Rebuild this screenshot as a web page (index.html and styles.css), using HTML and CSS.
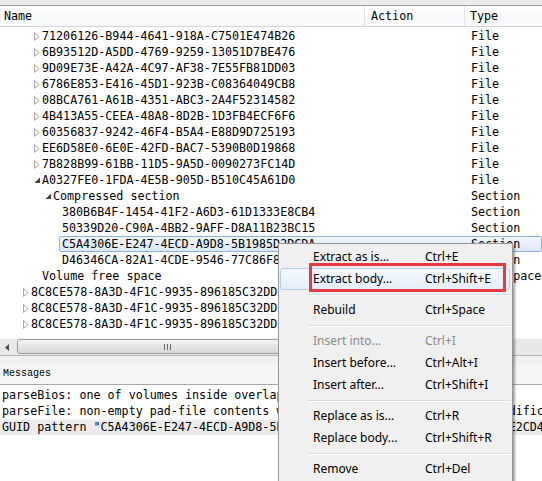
FILE: index.html
```html
<!DOCTYPE html>
<html>
<head>
<meta charset="utf-8">
<link rel="stylesheet" href="styles.css">
</head>
<body>
<div class="app">
  <div class="topstrip"></div>
  <div class="tree">
    <div class="thead">
      <div class="h-name">Name</div>
      <div class="h-action">Action</div>
      <div class="h-type">Type</div>
    </div>
    <div class="rows">
      <div class="row"><div class="name l2"><span class="arw"><svg width="6" height="9" viewBox="0 0 6 9"><path d="M0.5 0.5 L5 4.5 L0.5 8.5 Z" fill="#fff" stroke="#a6a6a6"/></svg></span>71206126-B944-4641-918A-C7501E474B26</div><div class="action"></div><div class="type">File</div></div>
      <div class="row"><div class="name l2"><span class="arw"><svg width="6" height="9" viewBox="0 0 6 9"><path d="M0.5 0.5 L5 4.5 L0.5 8.5 Z" fill="#fff" stroke="#a6a6a6"/></svg></span>6B93512D-A5DD-4769-9259-13051D7BE476</div><div class="action"></div><div class="type">File</div></div>
      <div class="row"><div class="name l2"><span class="arw"><svg width="6" height="9" viewBox="0 0 6 9"><path d="M0.5 0.5 L5 4.5 L0.5 8.5 Z" fill="#fff" stroke="#a6a6a6"/></svg></span>9D09E73E-A42A-4C97-AF38-7E55FB81DD03</div><div class="action"></div><div class="type">File</div></div>
      <div class="row"><div class="name l2"><span class="arw"><svg width="6" height="9" viewBox="0 0 6 9"><path d="M0.5 0.5 L5 4.5 L0.5 8.5 Z" fill="#fff" stroke="#a6a6a6"/></svg></span>6786E853-E416-45D1-923B-C08364049CB8</div><div class="action"></div><div class="type">File</div></div>
      <div class="row"><div class="name l2"><span class="arw"><svg width="6" height="9" viewBox="0 0 6 9"><path d="M0.5 0.5 L5 4.5 L0.5 8.5 Z" fill="#fff" stroke="#a6a6a6"/></svg></span>08BCA761-A61B-4351-ABC3-2A4F52314582</div><div class="action"></div><div class="type">File</div></div>
      <div class="row"><div class="name l2"><span class="arw"><svg width="6" height="9" viewBox="0 0 6 9"><path d="M0.5 0.5 L5 4.5 L0.5 8.5 Z" fill="#fff" stroke="#a6a6a6"/></svg></span>4B413A55-CEEA-48A8-8D2B-1D3FB4ECF6F6</div><div class="action"></div><div class="type">File</div></div>
      <div class="row"><div class="name l2"><span class="arw"><svg width="6" height="9" viewBox="0 0 6 9"><path d="M0.5 0.5 L5 4.5 L0.5 8.5 Z" fill="#fff" stroke="#a6a6a6"/></svg></span>60356837-9242-46F4-B5A4-E88D9D725193</div><div class="action"></div><div class="type">File</div></div>
      <div class="row"><div class="name l2"><span class="arw"><svg width="6" height="9" viewBox="0 0 6 9"><path d="M0.5 0.5 L5 4.5 L0.5 8.5 Z" fill="#fff" stroke="#a6a6a6"/></svg></span>EE6D58E0-6E0E-42FD-BAC7-5390B0D19868</div><div class="action"></div><div class="type">File</div></div>
      <div class="row"><div class="name l2"><span class="arw"><svg width="6" height="9" viewBox="0 0 6 9"><path d="M0.5 0.5 L5 4.5 L0.5 8.5 Z" fill="#fff" stroke="#a6a6a6"/></svg></span>7B828B99-61BB-11D5-9A5D-0090273FC14D</div><div class="action"></div><div class="type">File</div></div>
      <div class="row"><div class="name l2"><span class="arw"><svg width="7" height="7" viewBox="0 0 7 7"><path d="M6 0.5 L6 6 L0.5 6 Z" fill="#3f3f3f"/></svg></span>A0327FE0-1FDA-4E5B-905D-B510C45A61D0</div><div class="action"></div><div class="type">File</div></div>
      <div class="row"><div class="name l3"><span class="arw"><svg width="7" height="7" viewBox="0 0 7 7"><path d="M6 0.5 L6 6 L0.5 6 Z" fill="#3f3f3f"/></svg></span>Compressed section</div><div class="action"></div><div class="type">Section</div></div>
      <div class="row"><div class="name l4">380B6B4F-1454-41F2-A6D3-61D1333E8CB4</div><div class="action"></div><div class="type">Section</div></div>
      <div class="row"><div class="name l4">50339D20-C90A-4BB2-9AFF-D8A11B23BC15</div><div class="action"></div><div class="type">Section</div></div>
      <div class="row sel"><div class="name">C5A4306E-E247-4ECD-A9D8-5B1985D2DCDA</div><div class="action"></div><div class="type">Section</div></div>
      <div class="row"><div class="name l4">D46346CA-82A1-4CDE-9546-77C86F893509</div><div class="action"></div><div class="type">Section</div></div>
      <div class="row"><div class="name l2"><span class="arw"></span>Volume free space</div><div class="action"></div><div class="type">Free space</div></div>
      <div class="row"><div class="name l1"><span class="arw"><svg width="6" height="9" viewBox="0 0 6 9"><path d="M0.5 0.5 L5 4.5 L0.5 8.5 Z" fill="#fff" stroke="#a6a6a6"/></svg></span>8C8CE578-8A3D-4F1C-9935-896185C32DD3</div><div class="action"></div><div class="type">Volume</div></div>
      <div class="row"><div class="name l1"><span class="arw"><svg width="6" height="9" viewBox="0 0 6 9"><path d="M0.5 0.5 L5 4.5 L0.5 8.5 Z" fill="#fff" stroke="#a6a6a6"/></svg></span>8C8CE578-8A3D-4F1C-9935-896185C32DD3</div><div class="action"></div><div class="type">Volume</div></div>
      <div class="row"><div class="name l1"><span class="arw"><svg width="6" height="9" viewBox="0 0 6 9"><path d="M0.5 0.5 L5 4.5 L0.5 8.5 Z" fill="#fff" stroke="#a6a6a6"/></svg></span>8C8CE578-8A3D-4F1C-9935-896185C32DD3</div><div class="action"></div><div class="type">Volume</div></div>
    </div>
    <div class="hscroll">
      <div class="sb-btn"><svg width="4" height="7" viewBox="0 0 4 7"><path d="M4 0 L0 3.5 L4 7 Z" fill="#4d4d4d"/></svg></div>
      <div class="sb-thumb"><span class="grip"></span><span class="grip"></span><span class="grip"></span></div>
    </div>
  </div>
  <div class="splitter"></div>
  <div class="dock">
    <div class="dock-title">Messages</div>
    <div class="msgs">
      <div class="msg">parseBios: one of volumes inside overlaps the end of data</div>
      <div class="msg">parseFile: non-empty pad-file contents will be destroyed after volume modifications</div>
      <div class="msg cur">GUID pattern "C5A4306E-E247-4ECD-A9D8-5B1985D2DCDA" found as "6E30A4C547E2CD4EA9D85B1985D2DCDA" in C5A4306E-E247-4ECD-A9D8-5B1985D2DCDA</div>
    </div>
  </div>
</div>

<div class="menu">
  <div class="mi"><span>Extract as is...</span><span>Ctrl+E</span></div>
  <div class="mi hover"><span>Extract body...</span><span>Ctrl+Shift+E</span></div>
  <div class="sep"></div>
  <div class="mi"><span>Rebuild</span><span>Ctrl+Space</span></div>
  <div class="sep"></div>
  <div class="mi dis"><span>Insert into...</span><span>Ctrl+I</span></div>
  <div class="mi"><span>Insert before...</span><span>Ctrl+Alt+I</span></div>
  <div class="mi"><span>Insert after...</span><span>Ctrl+Shift+I</span></div>
  <div class="sep"></div>
  <div class="mi"><span>Replace as is...</span><span>Ctrl+R</span></div>
  <div class="mi"><span>Replace body...</span><span>Ctrl+Shift+R</span></div>
  <div class="sep"></div>
  <div class="mi"><span>Remove</span><span>Ctrl+Del</span></div>
</div>
<div class="redbox"></div>
</body>
</html>
```

FILE: styles.css
```css
html, body {
  margin: 0;
  padding: 0;
}
body {
  width: 542px;
  height: 481px;
  overflow: hidden;
  position: relative;
  background: #fff;
  font-family: "DejaVu Sans Mono", "Liberation Mono", monospace;
  font-size: 11.7px;
  color: #000;
}
.app {
  display: flex;
  flex-direction: column;
  height: 481px;
}
.topstrip {
  height: 5px;
  background: #ececec;
  border-bottom: 1px solid #9a9a9a;
  flex: none;
}
.tree {
  display: flex;
  flex-direction: column;
  flex: none;
}
.thead {
  display: flex;
  height: 20px;
  align-items: center;
  background: linear-gradient(#ffffff, #f6f7f9);
  border-bottom: 1px solid #d5d5d5;
}
.h-name {
  width: 365px;
  box-sizing: border-box;
  padding-left: 4px;
  border-right: 1px solid #e3e3e3;
  height: 20px;
  line-height: 20px;
}
.h-action {
  width: 100px;
  box-sizing: border-box;
  padding-left: 6px;
  border-right: 1px solid #e3e3e3;
  height: 20px;
  line-height: 20px;
}
.h-type {
  padding-left: 5px;
  line-height: 20px;
}
.rows {
  height: 310px;
  padding-top: 1px;
  overflow: hidden;
}
.row {
  display: flex;
  height: 16px;
  line-height: 16px;
  white-space: nowrap;
}
.name {
  width: 365px;
  box-sizing: border-box;
  display: flex;
  align-items: center;
  overflow: hidden;
  flex: none;
}
.l1 { padding-left: 20px; }
.l2 { padding-left: 31px; }
.l3 { padding-left: 42px; }
.l4 { padding-left: 62px; }
.arw {
  width: 11px;
  height: 16px;
  display: inline-flex;
  align-items: center;
  padding-left: 3px;
  box-sizing: border-box;
  flex: none;
}
.action {
  width: 100px;
  flex: none;
}
.type {
  padding-left: 6px;
}
.row.sel {
  margin-left: 59px;
  height: 16px;
  box-sizing: border-box;
  border: 1px solid #8fb2de;
  border-radius: 2px;
  background: linear-gradient(#eef5fd, #dde9f8);
  line-height: 14px;
}
.row.sel .name {
  width: 305px;
  padding-left: 2px;
}
.hscroll {
  height: 17px;
  display: flex;
  background: #e8e8e8;
  border-top: 1px solid #f4f4f4;
  box-sizing: border-box;
}
.sb-btn {
  width: 17px;
  display: flex;
  align-items: center;
  justify-content: center;
  padding-right: 4px;
  box-sizing: border-box;
}
.sb-thumb {
  width: 300px;
  margin: 0 0 1px 0;
  box-sizing: border-box;
  border: 1px solid #9c9c9c;
  border-radius: 3px;
  background: linear-gradient(#f5f5f5, #e4e4e4 50%, #d9d9d9);
  display: flex;
  align-items: center;
  justify-content: center;
  gap: 2px;
}
.grip {
  width: 1px;
  height: 6px;
  background: #6a6a6a;
}
.splitter {
  height: 8px;
  background: #f0f0f0;
  border-top: 1px solid #b4b4b4;
  flex: none;
}
.dock {
  flex: 1;
  display: flex;
  flex-direction: column;
}
.dock-title {
  height: 20px;
  line-height: 20px;
  padding-left: 3px;
  background: #f5f5f5;
  border-bottom: 1px solid #a8a8a8;
  font-family: "Liberation Mono", monospace;
  font-size: 10px;
}
.msgs {
  padding-top: 2px;
}
.msg {
  height: 16px;
  line-height: 16px;
  padding-left: 2px;
  white-space: nowrap;
  overflow: hidden;
}
.msg.cur {
  background: #ececec;
  border-top: 1px solid #f6f6f6;
  box-sizing: border-box;
  line-height: 15px;
}
.menu {
  position: absolute;
  left: 278px;
  top: 243px;
  width: 235px;
  height: 250px;
  box-sizing: border-box;
  background: #f0f0f0;
  border: 1px solid #979797;
  box-shadow: 2px 2px 2px rgba(0, 0, 0, 0.35);
  padding-top: 2px;
  font-family: "Noto Sans", "Open Sans", sans-serif;
  font-size: 12px;
  color: #000;
}
.mi {
  display: grid;
  grid-template-columns: 112px auto;
  height: 22px;
  line-height: 22px;
  padding-left: 34px;
  white-space: nowrap;
}
.mi.hover {
  margin: 0 2px 0 1px;
  padding-left: 32px;
  box-sizing: border-box;
  border: 1px solid #b6cfec;
  border-radius: 3px;
  background: linear-gradient(#f3f8fd, #e4eefa);
  line-height: 20px;
}
.mi.dis {
  color: #8d8d8d;
}
.sep {
  height: 1px;
  background: #dadada;
  border-bottom: 1px solid #ffffff;
  margin: 4px 2px 3px 29px;
}
.redbox {
  position: absolute;
  left: 309px;
  top: 263px;
  width: 197px;
  height: 29px;
  box-sizing: border-box;
  border: 3px solid #e53a3f;
}
```
